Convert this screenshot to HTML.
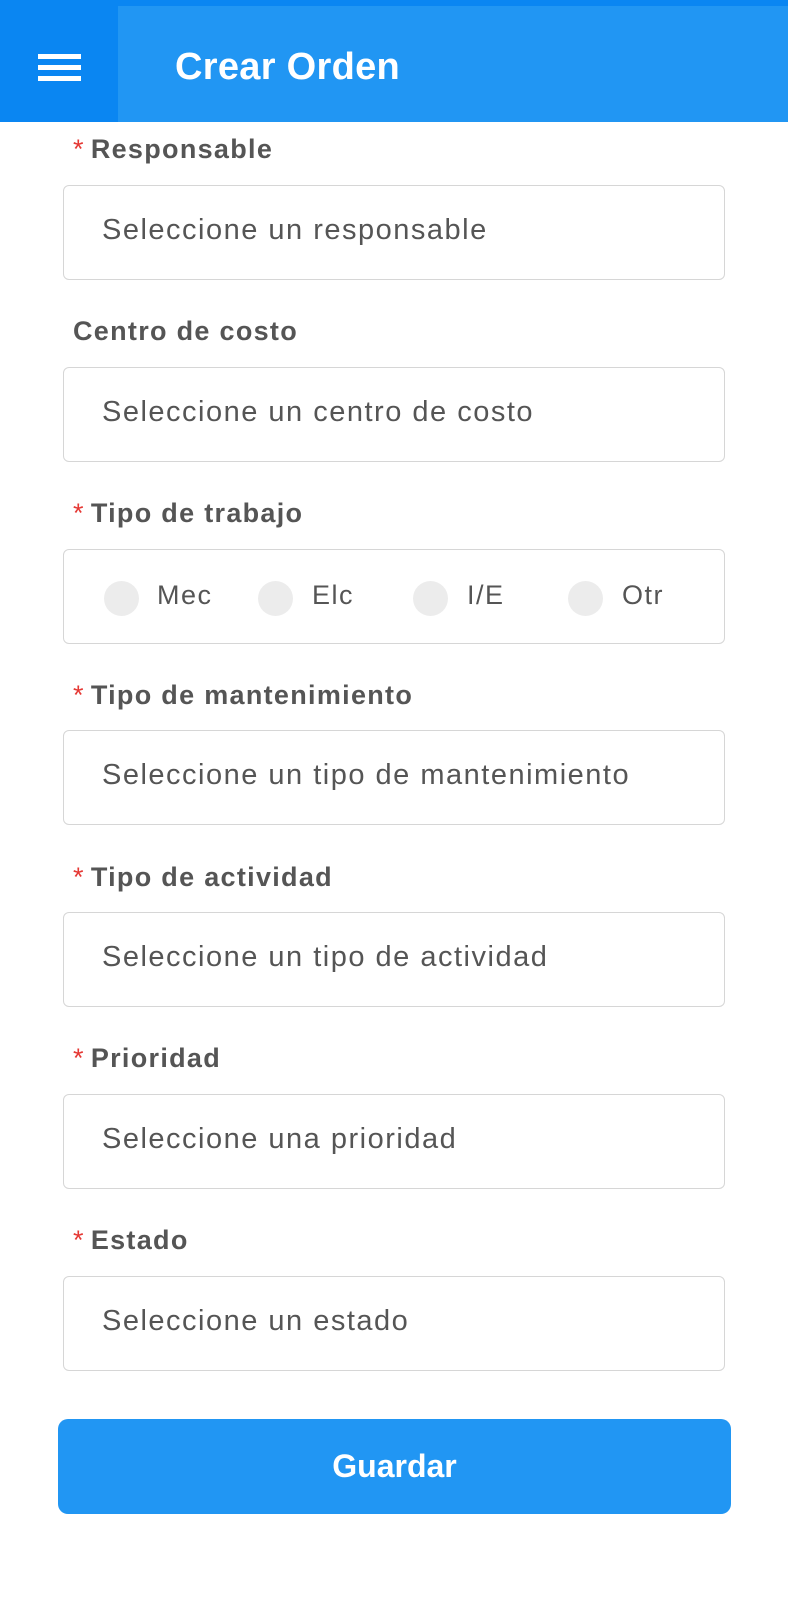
<!DOCTYPE html>
<html><head><meta charset="utf-8"><style>
*{margin:0;padding:0;box-sizing:border-box}
body{width:788px;height:1600px;background:#fff;font-family:"Liberation Sans",sans-serif;position:relative;overflow:hidden}
.top{position:absolute;left:0;top:0;width:788px;height:6px;background:#0a86f2}
.hdr{position:absolute;left:0;top:6px;width:788px;height:116px;background:#2196f3}
.menu{position:absolute;left:0;top:0;width:118px;height:122px;background:#0a86f2}
.menu i{position:absolute;left:38px;width:43px;height:5px;background:#fff}
.title{position:absolute;left:175px;top:46px;color:#fff;font-size:38px;font-weight:bold;letter-spacing:0.3px}
.lbl{position:absolute;left:73px;font-size:27px;font-weight:bold;color:#555;letter-spacing:1.3px}
.lbl b{color:#e53935;font-weight:normal;margin-right:6px}
.box{position:absolute;left:63px;width:662px;height:95px;border:1.5px solid #d6d6d6;border-radius:6px}
.box span{position:absolute;left:38px;top:28px;font-size:29px;color:#555;letter-spacing:1.5px;white-space:nowrap}
.rad{position:absolute;top:31px;width:35px;height:35px;border-radius:50%;background:#ececec}
.rt{position:absolute;top:30px;font-size:27px;color:#555;letter-spacing:1.5px}
.btn{position:absolute;left:58px;top:1419px;width:673px;height:95px;background:#2196f3;border-radius:10px;color:#fff;font-size:32px;font-weight:bold;text-align:center;line-height:95px}
</style></head><body>
<div class="hdr"></div><div class="top"></div>
<div class="menu"><i style="top:54px"></i><i style="top:65px"></i><i style="top:76px"></i></div>
<div class="title">Crear Orden</div>

<div class="lbl" style="top:134px"><b>*</b>Responsable</div>
<div class="box" style="top:185px"><span>Seleccione un responsable</span></div>

<div class="lbl" style="top:316px">Centro de costo</div>
<div class="box" style="top:367px"><span>Seleccione un centro de costo</span></div>

<div class="lbl" style="top:498px"><b>*</b>Tipo de trabajo</div>
<div class="box" style="top:549px">
<div class="rad" style="left:40px"></div><div class="rt" style="left:93px">Mec</div>
<div class="rad" style="left:194px"></div><div class="rt" style="left:248px">Elc</div>
<div class="rad" style="left:349px"></div><div class="rt" style="left:403px">I/E</div>
<div class="rad" style="left:504px"></div><div class="rt" style="left:558px">Otr</div>
</div>

<div class="lbl" style="top:680px"><b>*</b>Tipo de mantenimiento</div>
<div class="box" style="top:730px"><span>Seleccione un tipo de mantenimiento</span></div>

<div class="lbl" style="top:862px"><b>*</b>Tipo de actividad</div>
<div class="box" style="top:912px"><span>Seleccione un tipo de actividad</span></div>

<div class="lbl" style="top:1043px"><b>*</b>Prioridad</div>
<div class="box" style="top:1094px"><span>Seleccione una prioridad</span></div>

<div class="lbl" style="top:1225px"><b>*</b>Estado</div>
<div class="box" style="top:1276px"><span>Seleccione un estado</span></div>

<div class="btn">Guardar</div>
</body></html>
